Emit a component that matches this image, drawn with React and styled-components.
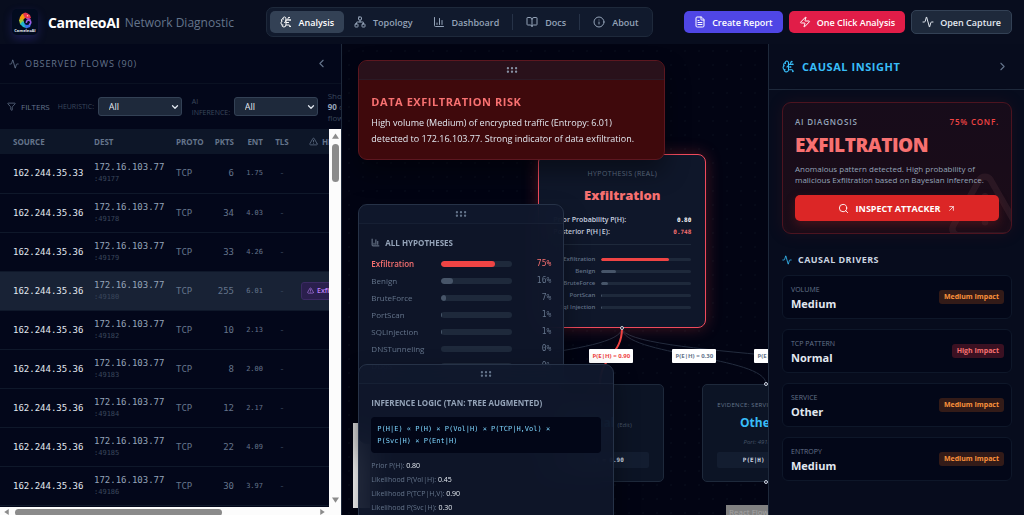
import React from 'react';
import styled, { createGlobalStyle } from 'styled-components';
import {
    Activity,
    ArrowUpRight,
    BookOpen,
    BrainCircuit,
    ChartColumn,
    ChevronDown,
    ChevronLeft,
    ChevronRight,
    FileText,
    Funnel,
    GripHorizontal,
    Info,
    Network,
    Search,
    TriangleAlert,
    Zap,
} from 'lucide-react';

const flows = [
    { src: '162.244.35.33', port: 49177, pkts: 6, ent: '1.75' },
    { src: '162.244.35.36', port: 49178, pkts: 34, ent: '4.03' },
    { src: '162.244.35.36', port: 49179, pkts: 33, ent: '4.26' },
    { src: '162.244.35.36', port: 49180, pkts: 255, ent: '6.01', flag: 'Exfiltration' },
    { src: '162.244.35.36', port: 49182, pkts: 10, ent: '2.13' },
    { src: '162.244.35.36', port: 49183, pkts: 8, ent: '2.00' },
    { src: '162.244.35.36', port: 49184, pkts: 12, ent: '2.17' },
    { src: '162.244.35.36', port: 49185, pkts: 22, ent: '4.09' },
    { src: '162.244.35.36', port: 49186, pkts: 30, ent: '3.97' },
];

const hypotheses = [
    { name: 'Exfiltration', pct: 75 },
    { name: 'Benign', pct: 16 },
    { name: 'BruteForce', pct: 7 },
    { name: 'PortScan', pct: 1 },
    { name: 'SQLInjection', pct: 1 },
    { name: 'DNSTunneling', pct: 0 },
    { name: 'DDoS', pct: 0 },
];

const likelihoods = [
    ['Prior P(H):', '0.80'],
    ['Likelihood P(Vol|H):', '0.45'],
    ['Likelihood P(TCP|H,V):', '0.90'],
    ['Likelihood P(Svc|H):', '0.30'],
];

const drivers = [
    { name: 'Volume', value: 'Medium', impact: 'Medium' },
    { name: 'TCP Pattern', value: 'Normal', impact: 'High' },
    { name: 'Service', value: 'Other', impact: 'Medium' },
    { name: 'Entropy', value: 'Medium', impact: 'Medium' },
];

const Logo = () => (
    <LogoBox>
        <svg width="26" height="26" viewBox="0 0 26 26" role="img" aria-label="CameleoAI logo">
            <path d="M8 8l2-3 3-1 1 4-3 3-4 1z" fill="#f59e0b" />
            <path d="M11 5l2-1.5L15 4l3 2 1 3-3 1-3-1z" fill="#e8364f" />
            <path d="M7 11l4-1 1 3-2 3-2-1z" fill="#a3c93a" />
            <path d="M8 15l3-3 2 3 1 4-3-1z" fill="#22b8cf" />
            <path d="M12 15l3 1 4-1-1 3-4 1.5z" fill="#3b6fe8" />
            <path d="M14.5 14a2.2 2.2 0 1 1 2.5 1.5" stroke="#9b5de5" strokeWidth="1.6" fill="none" />
            <path d="M14 9l4 .5 1 1.5-4-.5z" fill="#c04bd0" />
            <circle cx="15.5" cy="6.8" r="0.7" fill="#ffe3a3" />
            <text x="13" y="23" textAnchor="middle" fontSize="4" fontWeight="700" fill="#e2e8f0">CameleoAI</text>
        </svg>
    </LogoBox>
);

const Grip = () => (
    <GripBar>
        <GripHorizontal size={14} />
    </GripBar>
);

const Header = () => (
    <TopBar>
        <Brand>
            <Logo />
            <BrandName>CameleoAI</BrandName>
            <BrandSub>Network Diagnostic</BrandSub>
        </Brand>
        <Nav>
            <NavItem $active><BrainCircuit size={12} />Analysis</NavItem>
            <NavItem><Network size={12} />Topology</NavItem>
            <NavItem><ChartColumn size={12} />Dashboard</NavItem>
            <NavLine />
            <NavItem><BookOpen size={12} />Docs</NavItem>
            <NavLine />
            <NavItem><Info size={12} />About</NavItem>
        </Nav>
        <Actions>
            <Action $bg="#4f46e5"><FileText size={12} />Create Report</Action>
            <Action $bg="#e11d48"><Zap size={12} />One Click Analysis</Action>
            <Action $bg="#1e293b" $line="#334155"><Activity size={12} />Open Capture</Action>
        </Actions>
    </TopBar>
);

const FlowPanel = () => (
    <Left>
        <LeftHead>
            <Activity size={10} />
            <LeftTitle>Observed Flows (90)</LeftTitle>
            <IconBtn aria-label="Collapse flows"><ChevronLeft size={13} /></IconBtn>
        </LeftHead>
        <Filters>
            <FilterTag><Funnel size={9} />FILTERS</FilterTag>
            <FilterLabel htmlFor="heuristic">HEURISTIC:</FilterLabel>
            <SelectBox>
                <Select id="heuristic"><option>All</option></Select>
                <ChevronDown size={10} strokeWidth={3} />
            </SelectBox>
            <FilterLabel htmlFor="inference" $wrap>AI INFERENCE:</FilterLabel>
            <SelectBox>
                <Select id="inference"><option>All</option></Select>
                <ChevronDown size={10} strokeWidth={3} />
            </SelectBox>
            <Showing>Showing <b>90</b> of 90 flows</Showing>
        </Filters>
        <TableArea>
            <TableClip>
                <Table>
                    <colgroup>
                        <col width="88" />
                        <col width="82" />
                        <col width="38" />
                        <col width="32" />
                        <col width="29" />
                        <col width="26" />
                        <col width="120" />
                    </colgroup>
                    <thead>
                        <tr>
                            <Th>Source</Th>
                            <Th>Dest</Th>
                            <Th>Proto</Th>
                            <Th $align="right">Pkts</Th>
                            <Th $align="right">Ent</Th>
                            <Th $align="center">TLS</Th>
                            <Th $align="center"><ThIcon><TriangleAlert size={9} />Heuristic</ThIcon></Th>
                        </tr>
                    </thead>
                    <tbody>
                        {flows.map(f => (
                            <Row key={f.port} $on={!!f.flag}>
                                <Td $color="#e2e8f0">{f.src}</Td>
                                <Td $color="#94a3b8">172.16.103.77<Port>:{f.port}</Port></Td>
                                <Td>TCP</Td>
                                <Td $align="right">{f.pkts}</Td>
                                <Td $align="right" $small>{f.ent}</Td>
                                <Td $align="center" $color="#334155">-</Td>
                                <Td>{f.flag && <Flag><TriangleAlert size={7} />{f.flag}</Flag>}</Td>
                            </Row>
                        ))}
                    </tbody>
                </Table>
            </TableClip>
            <VBar>
                <Arrow viewBox="0 0 8 6"><path d="M4 0l4 6H0z" /></Arrow>
                <VThumb />
                <Arrow viewBox="0 0 8 6"><path d="M0 0h8L4 6z" /></Arrow>
            </VBar>
        </TableArea>
        <HBar>
            <Arrow viewBox="0 0 6 8"><path d="M6 0v8L0 4z" /></Arrow>
            <HThumb />
            <Arrow viewBox="0 0 6 8"><path d="M0 0v8l6-4z" /></Arrow>
        </HBar>
    </Left>
);

const Graph = () => (
    <Canvas>
        <Edges>
            <path d="M280 284C280 312 92 312 92 340" />
            <path d="M280 284C280 312 424 312 424 340" />
            <path d="M280 284C280 312 588 312 588 340" />
            <path className="hot" d="M280 284C280 312 258 312 258 340" />
        </Edges>
        <EdgeLabel $x={247} $y={305} $hot>P(E|H) = 0.90</EdgeLabel>
        <EdgeLabel $x={330} $y={305}>P(E|H) = 0.30</EdgeLabel>
        <EdgeLabel $x={412} $y={305}>P(E|H) = 0.85</EdgeLabel>

        <RootNode>
            <NodeKind>Hypothesis (Real)</NodeKind>
            <RootName>Exfiltration</RootName>
            <ProbRow>Prior Probability P(H):<Mono>0.80</Mono></ProbRow>
            <ProbRow>Posterior P(H|E):<Mono $red>0.748</Mono></ProbRow>
            <Rule />
            {hypotheses.slice(0, 5).map((h, i) => (
                <MiniRow key={h.name}>
                    <span>{h.name === 'SQLInjection' ? 'Sql Injection' : h.name}</span>
                    <Track $h={3}><Fill $hot={i === 0} style={{ width: `${h.pct}%` }} /></Track>
                </MiniRow>
            ))}
        </RootNode>
        <Handle $x={280} $y={284} />

        <EvidenceNode $x={194} $y={340}>
            <NodeKind $small>Evidence: TCP</NodeKind>
            <EvidenceName>Normal <Edit>(Edit)</Edit></EvidenceName>
            <EvidenceNote>Ratio: 1:1</EvidenceNote>
            <EvidenceProb>P(E|H) = 0.90</EvidenceProb>
        </EvidenceNode>
        <EvidenceNode $x={360} $y={340}>
            <NodeKind $small>Evidence: Service</NodeKind>
            <EvidenceName>Other <Edit>(Edit)</Edit></EvidenceName>
            <EvidenceNote>Port: 49180 (TCP)</EvidenceNote>
            <EvidenceProb>P(E|H) = 0.30</EvidenceProb>
        </EvidenceNode>
        <Handle $x={424} $y={340} />
        <Handle $x={424} $y={438} />
        <ZoomControls />
        <Attribution href="#reactflow">React Flow</Attribution>

        <AlertPanel>
            <Grip />
            <AlertBody>
                <AlertTitle>Data Exfiltration Risk</AlertTitle>
                <AlertText>High volume (Medium) of encrypted traffic (Entropy: 6.01) detected to 172.16.103.77. Strong indicator of data exfiltration.</AlertText>
            </AlertBody>
        </AlertPanel>

        <HypoPanel>
            <Grip />
            <PanelBody>
                <PanelTitle><ChartColumn size={9} />ALL HYPOTHESES</PanelTitle>
                {hypotheses.map((h, i) => (
                    <HypoRow key={h.name} $hot={i === 0}>
                        <span>{h.name}</span>
                        <Track $h={6}><Fill $hot={i === 0} style={{ width: `${h.pct}%` }} /></Track>
                        <Pct>{h.pct}%</Pct>
                    </HypoRow>
                ))}
            </PanelBody>
        </HypoPanel>

        <LogicPanel>
            <Grip />
            <PanelBody>
                <PanelTitle>INFERENCE LOGIC (TAN: TREE AUGMENTED)</PanelTitle>
                <Formula>P(H|E) ∝ P(H) × P(Vol|H) × P(TCP|H,Vol) × P(Svc|H) × P(Ent|H)</Formula>
                {likelihoods.map(([name, value]) => (
                    <Likelihood key={name}>{name} <b>{value}</b></Likelihood>
                ))}
            </PanelBody>
        </LogicPanel>
    </Canvas>
);

const Insight = () => (
    <Right>
        <RightHead>
            <BrainCircuit size={13} />
            <RightTitle>Causal Insight</RightTitle>
            <IconBtn aria-label="Collapse insight"><ChevronRight size={13} /></IconBtn>
        </RightHead>
        <RightBody>
            <Diagnosis>
                <Watermark><TriangleAlert size={78} /></Watermark>
                <DiagTop>AI DIAGNOSIS<Conf>75% CONF.</Conf></DiagTop>
                <DiagName>EXFILTRATION</DiagName>
                <DiagText>Anomalous pattern detected. High probability of malicious Exfiltration based on Bayesian inference.</DiagText>
                <Inspect><Search size={11} />INSPECT ATTACKER<ArrowUpRight size={9} /></Inspect>
            </Diagnosis>
            <DriversTitle><Activity size={10} />Causal Drivers</DriversTitle>
            <Drivers>
                {drivers.map(d => (
                    <Driver key={d.name}>
                        <div>
                            <DriverName>{d.name}</DriverName>
                            <DriverValue>{d.value}</DriverValue>
                        </div>
                        <Impact $high={d.impact === 'High'}>{d.impact} Impact</Impact>
                    </Driver>
                ))}
            </Drivers>
        </RightBody>
    </Right>
);

const App = () => (
    <Shell>
        <GlobalStyle />
        <Header />
        <Main>
            <FlowPanel />
            <Graph />
            <Insight />
        </Main>
    </Shell>
);

const sans = '"Open Sans", "Noto Sans", sans-serif';
const mono = '"DejaVu Sans Mono", "Liberation Mono", monospace';

const GlobalStyle = createGlobalStyle`
    * { box-sizing: border-box; }
    body {
        margin: 0;
        background: #020617;
        color: #e2e8f0;
        font-family: ${sans};
        font-size: 10px;
    }
    button, select { font-family: inherit; margin: 0; }
    svg { flex: none; display: block; }
    h1, h2, h3, p { margin: 0; }
`;

const Shell = styled.div`
    height: 100vh;
    display: flex;
    flex-direction: column;
    overflow: hidden;
`;

const TopBar = styled.header`
    flex: none;
    height: 44px;
    padding: 0 12px;
    display: flex;
    align-items: center;
    justify-content: space-between;
    background: #080d1e;
    white-space: nowrap;
`;
const Brand = styled.div`
    display: flex;
    align-items: center;
`;
const LogoBox = styled.div`
    border-radius: 5px;
    background: #020b1f;
    box-shadow: 0 4px 10px rgba(79, 70, 229, 0.25);
`;
const BrandName = styled.h1`
    margin-left: 10px;
    font-size: 14px;
    letter-spacing: -0.025em;
    color: #fff;
`;
const BrandSub = styled.span`
    margin-left: 5px;
    font-size: 12px;
    color: #64748b;
`;

const Nav = styled.nav`
    display: flex;
    align-items: center;
    padding: 3px;
    border: 1px solid #1e293b;
    border-radius: 7px;
    background: #111a2d;
`;
const NavItem = styled.button`
    height: 22px;
    padding: 0 10px;
    display: flex;
    align-items: center;
    gap: 7px;
    border: 0;
    border-radius: 5px;
    background: ${p => (p.$active ? '#334155' : 'transparent')};
    color: ${p => (p.$active ? '#fff' : '#94a3b8')};
    font-size: 9px;
    font-weight: 600;
`;
const NavLine = styled.span`
    width: 1px;
    height: 16px;
    margin: 0 3px;
    background: #263247;
`;

const Actions = styled.div`
    display: flex;
    align-items: center;
    gap: 6px;
`;
const Action = styled.button`
    height: ${p => (p.$line ? '24px' : '22px')};
    padding: 0 10px;
    display: flex;
    align-items: center;
    gap: 6px;
    border: ${p => (p.$line ? `1px solid ${p.$line}` : '0')};
    border-radius: 5px;
    background: ${p => p.$bg};
    color: ${p => (p.$line ? '#e2e8f0' : '#fff')};
    font-size: 9px;
    font-weight: 600;
`;

const Main = styled.main`
    flex: 1;
    min-height: 0;
    display: grid;
    grid-template-columns: calc(100% / 3 + 1px) 1fr 25%;
`;

const Left = styled.section`
    min-width: 0;
    min-height: 0;
    display: flex;
    flex-direction: column;
    overflow: hidden;
    border-right: 1px solid #1e293b;
    background: #03071a;
`;
const LeftHead = styled.div`
    flex: none;
    height: 40px;
    padding: 0 13px 0 9px;
    display: flex;
    align-items: center;
    gap: 6px;
    border-bottom: 1px solid #0a1122;
    color: #64748b;
`;
const LeftTitle = styled.h2`
    flex: 1;
    font-size: 9px;
    font-weight: 500;
    letter-spacing: 0.1em;
    text-transform: uppercase;
`;
const IconBtn = styled.button`
    padding: 0;
    border: 0;
    background: none;
    color: #64748b;
`;

const Filters = styled.div`
    flex: none;
    height: 45px;
    padding-left: 7px;
    display: flex;
    align-items: center;
    overflow: hidden;
    color: #3b475c;
    font-size: 8px;
`;
const FilterTag = styled.span`
    display: flex;
    align-items: center;
    gap: 5px;
    margin-right: 8px;
    color: #64748b;
`;
const FilterLabel = styled.label`
    flex: none;
    width: ${p => (p.$wrap ? '42px' : '40px')};
    font-size: 7px;
    line-height: 11px;
`;
const SelectBox = styled.span`
    flex: none;
    display: grid;
    align-items: center;
    margin-right: 10px;

    > * { grid-area: 1 / 1; }
    > svg {
        justify-self: end;
        margin-right: 2px;
        color: #e2e8f0;
        pointer-events: none;
    }
`;
const Select = styled.select`
    width: 84px;
    height: 19px;
    padding: 0 10px;
    appearance: none;
    border: 1px solid #334155;
    border-radius: 3px;
    background: #1e293b;
    color: #e2e8f0;
    font-size: 9px;
`;
const Showing = styled.span`
    flex: none;
    width: 34px;
    line-height: 11px;
    font-size: 8px;
    b { color: #94a3b8; }
`;

const TableArea = styled.div`
    flex: 1;
    min-height: 0;
    display: flex;
`;
const TableClip = styled.div`
    flex: 1;
    min-width: 0;
    overflow: hidden;
`;
const Table = styled.table`
    width: 415px;
    table-layout: fixed;
    border-collapse: collapse;
`;
const Th = styled.th`
    height: 25px;
    padding: 0 6px;
    background: #0d1628;
    color: #64748b;
    font-size: 8px;
    font-weight: 700;
    text-align: ${p => p.$align || 'left'};
    text-transform: uppercase;
    &:first-child { padding-left: 13px; }
`;
const ThIcon = styled.span`
    display: flex;
    align-items: center;
    gap: 4px;
    padding-left: 8px;
`;
const Row = styled.tr`
    height: 39px;
    border-bottom: 1px solid #0f182a;
    background: ${p => (p.$on ? '#182235' : 'transparent')};
`;
const Td = styled.td`
    padding: 0 6px;
    color: ${p => p.$color || '#64748b'};
    font-family: ${mono};
    font-size: ${p => (p.$small ? '7px' : '9px')};
    line-height: 12px;
    text-align: ${p => p.$align || 'left'};
    &:first-child { padding-left: 13px; }
`;
const Port = styled.div`
    color: #3b475c;
    font-size: 7px;
`;
const Flag = styled.span`
    display: inline-flex;
    align-items: center;
    gap: 3px;
    height: 18px;
    padding: 0 5px;
    border: 1px solid #3b2a63;
    border-radius: 3px;
    background: #2a1f4d;
    color: #c084fc;
    font-family: ${sans};
    font-size: 7px;
    font-weight: 600;
`;

const VBar = styled.div`
    flex: none;
    width: 12px;
    padding: 4px 0;
    display: flex;
    flex-direction: column;
    align-items: center;
    gap: 5px;
    background: #fcfcfc;
    > :last-child { margin-top: auto; }
`;
const VThumb = styled.div`
    width: 7px;
    height: 38px;
    border-radius: 4px;
    background: #8b8b8b;
`;
const HBar = styled.div`
    flex: none;
    height: 8px;
    padding: 2px 15px 0 3px;
    display: flex;
    gap: 5px;
    overflow: hidden;
    background: #fcfcfc;
    > :last-child { margin-left: auto; }
`;
const HThumb = styled.div`
    width: 64%;
    height: 7px;
    border-radius: 4px;
    background: #8b8b8b;
`;
const Arrow = styled.svg`
    width: 7px;
    height: 6px;
    fill: #8b8b8b;
`;

const Canvas = styled.section`
    position: relative;
    min-width: 0;
    overflow: hidden;
    background: #020413 radial-gradient(circle, #080d1c 0.5px, transparent 1px) 0 0 / 14px 14px;
`;
const Edges = styled.svg`
    position: absolute;
    inset: 0;
    width: 100%;
    height: 100%;
    fill: none;
    stroke: #232c3e;
    stroke-width: 1;
    .hot { stroke: #ef4444; stroke-width: 2; }
`;
const EdgeLabel = styled.span`
    position: absolute;
    left: ${p => p.$x}px;
    top: ${p => p.$y}px;
    width: 44px;
    height: 14px;
    border-radius: 1px;
    background: #fff;
    color: ${p => (p.$hot ? '#ef4444' : '#64748b')};
    font-size: 6px;
    font-weight: 700;
    line-height: 14px;
    text-align: center;
    white-space: nowrap;
`;
const Handle = styled.i`
    position: absolute;
    left: ${p => p.$x - 2}px;
    top: ${p => p.$y - 2}px;
    width: 4px;
    height: 4px;
    border: 1px solid #cbd5e1;
    border-radius: 50%;
    background: #1a192b;
`;

const RootNode = styled.div`
    position: absolute;
    left: 196px;
    top: 110px;
    width: 168px;
    height: 174px;
    padding: 14px 14px 0;
    border: 1px solid #f04a5c;
    border-radius: 8px;
    background: #0f172a;
    box-shadow: 0 0 16px rgba(239, 68, 68, 0.3);
`;
const NodeKind = styled.div`
    color: #64748b;
    font-size: ${p => (p.$small ? '6px' : '7px')};
    line-height: 10px;
    letter-spacing: 0.05em;
    text-align: ${p => (p.$small ? 'left' : 'center')};
    text-transform: uppercase;
    white-space: nowrap;
`;
const RootName = styled.div`
    margin: 8px 0 11px;
    color: #f87171;
    font-size: 13px;
    font-weight: 800;
    line-height: 16px;
    text-align: center;
`;
const ProbRow = styled.div`
    display: flex;
    justify-content: space-between;
    color: #cbd5e1;
    font-size: 7px;
    font-weight: 600;
    line-height: 12px;
`;
const Mono = styled.b`
    color: ${p => (p.$red ? '#f87171' : '#fff')};
    font-family: ${mono};
    font-size: 6px;
`;
const Rule = styled.div`
    height: 1px;
    margin: 6px 0 8px;
    background: #1e293b;
`;
const MiniRow = styled.div`
    height: 12px;
    display: grid;
    grid-template-columns: 42px 1fr;
    gap: 6px;
    align-items: center;
    color: #64748b;
    font-size: 6px;
    font-weight: 600;
    text-align: right;
    white-space: nowrap;
    > span { justify-self: end; }
`;
const Track = styled.div`
    height: ${p => p.$h}px;
    border-radius: 3px;
    overflow: hidden;
    background: #1e293b;
`;
const Fill = styled.div`
    height: 100%;
    border-radius: 3px;
    background: ${p => (p.$hot ? '#ef4444' : '#475569')};
`;

const EvidenceNode = styled.div`
    position: absolute;
    left: ${p => p.$x}px;
    top: ${p => p.$y}px;
    width: 128px;
    height: 98px;
    padding: 15px 14px;
    border: 1px solid #1e293b;
    border-radius: 5px;
    background: #0c1425;
    text-align: center;
`;
const EvidenceName = styled.div`
    margin-top: 4px;
    color: #38bdf8;
    font-size: 12px;
    font-weight: 700;
    line-height: 18px;
    white-space: nowrap;
`;
const Edit = styled.span`
    color: #475569;
    font-size: 6px;
    font-weight: 400;
`;
const EvidenceNote = styled.div`
    margin: 3px 0 5px;
    color: #475569;
    font-size: 6px;
    font-style: italic;
    line-height: 10px;
`;
const EvidenceProb = styled.div`
    border-radius: 2px;
    background: #131d30;
    color: #cbd5e1;
    font-family: ${mono};
    font-size: 6px;
    font-weight: 700;
    line-height: 16px;
`;
const ZoomControls = styled.div`
    position: absolute;
    left: 11px;
    top: 379px;
    width: 17px;
    height: 85px;
    background: #fefefe;
`;
const Attribution = styled.a`
    position: absolute;
    right: 0;
    bottom: 0;
    width: 42px;
    height: 10px;
    padding-left: 3px;
    overflow: hidden;
    background: #818181;
    color: #a3a3a3;
    font-size: 8px;
    line-height: 14px;
    white-space: nowrap;
    text-decoration: none;
`;

const Panel = styled.div`
    position: absolute;
    left: 16px;
    border: 1px solid #263247;
    border-radius: 9px;
    overflow: hidden;
    background: rgba(15, 23, 42, 0.92);
    backdrop-filter: blur(12px);
    box-shadow: 0 12px 25px rgba(0, 0, 0, 0.4);
`;
const GripBar = styled.div`
    height: 19px;
    display: flex;
    align-items: center;
    justify-content: center;
    border-bottom: 1px solid rgba(51, 65, 85, 0.2);
    background: rgba(30, 41, 59, 0.15);
    color: #64748b;
`;
const AlertPanel = styled(Panel)`
    top: 16px;
    width: 307px;
    height: 100px;
    border-color: #5c1720;
    background: #3f090c;
    ${GripBar} { background: #29111b; color: #8791a3; }
`;
const HypoPanel = styled(Panel)`
    top: 160px;
    width: 206px;
    height: 240px;
`;
const LogicPanel = styled(Panel)`
    top: 320px;
    width: 256px;
    height: 190px;
`;
const AlertBody = styled.div`
    padding: 14px 24px 14px 12px;
`;
const AlertTitle = styled.h3`
    margin-bottom: 6px;
    color: #f87171;
    font-size: 11px;
    line-height: 15px;
    letter-spacing: 0.05em;
    text-transform: uppercase;
`;
const AlertText = styled.p`
    color: #e2e8f0;
    font-size: 9px;
    line-height: 16px;
`;
const PanelBody = styled.div`
    padding: 12px;
`;
const PanelTitle = styled.h3`
    display: flex;
    align-items: center;
    gap: 5px;
    height: 12px;
    margin-bottom: 7px;
    color: #94a3b8;
    font-size: 8px;
    white-space: nowrap;
`;
const HypoRow = styled.div`
    height: 17px;
    display: grid;
    grid-template-columns: 70px 71px 1fr;
    align-items: center;
    color: ${p => (p.$hot ? '#f87171' : '#64748b')};
    font-size: 8px;
    font-weight: ${p => (p.$hot ? 600 : 400)};
`;
const Pct = styled.span`
    font-family: ${mono};
    font-weight: 400;
    text-align: right;
`;
const Formula = styled.div`
    margin: 9px 0 6px;
    padding: 6px 24px 6px 6px;
    border-radius: 4px;
    background: #020617;
    color: #7dd3fc;
    font-family: ${mono};
    font-size: 7px;
    line-height: 12px;
`;
const Likelihood = styled.p`
    color: #64748b;
    font-size: 7px;
    line-height: 14px;
    b { color: #e2e8f0; font-weight: 500; }
`;

const Right = styled.aside`
    min-width: 0;
    overflow: hidden;
    border-left: 1px solid #1e293b;
    background: #070c1d;
`;
const RightHead = styled.div`
    height: 46px;
    padding: 0 15px 0 13px;
    display: flex;
    align-items: center;
    gap: 7px;
    border-bottom: 1px solid #1e293b;
    color: #38bdf8;
`;
const RightTitle = styled.h2`
    flex: 1;
    font-size: 11px;
    letter-spacing: 0.05em;
    text-transform: uppercase;
`;
const RightBody = styled.div`
    padding: 12px 12px 12px 13px;
`;
const Diagnosis = styled.div`
    position: relative;
    padding: 13px 12px 12px;
    border: 1px solid #4c1420;
    border-radius: 9px;
    overflow: hidden;
    background: linear-gradient(#170c1a, #1b0c18);
    box-shadow: 0 0 16px rgba(127, 29, 29, 0.15);
`;
const Watermark = styled.span`
    position: absolute;
    right: -13px;
    bottom: -12px;
    color: rgba(248, 150, 150, 0.08);
`;
const DiagTop = styled.div`
    display: flex;
    justify-content: space-between;
    color: #94a3b8;
    font-size: 8px;
    font-weight: 600;
    line-height: 12px;
    letter-spacing: 0.1em;
`;
const Conf = styled.span`
    color: #ef4444;
`;
const DiagName = styled.div`
    margin: 6px 0 7px;
    color: #f87171;
    font-size: 19px;
    font-weight: 800;
    line-height: 22px;
    letter-spacing: -0.025em;
`;
const DiagText = styled.p`
    margin-bottom: 10px;
    color: #94a3b8;
    font-size: 8px;
    line-height: 11px;
`;
const Inspect = styled.button`
    position: relative;
    width: 100%;
    height: 26px;
    display: flex;
    align-items: center;
    justify-content: center;
    gap: 7px;
    border: 0;
    border-radius: 5px;
    background: #dc2626;
    color: #fff;
    font-size: 9px;
    font-weight: 700;
    box-shadow: 0 4px 10px rgba(127, 29, 29, 0.4);
`;
const DriversTitle = styled.h3`
    display: flex;
    align-items: center;
    gap: 6px;
    margin: 20px 0 9px;
    color: #cbd5e1;
    font-size: 9px;
    line-height: 12px;
    letter-spacing: 0.05em;
    text-transform: uppercase;
    svg { color: #38bdf8; }
`;
const Drivers = styled.div`
    display: flex;
    flex-direction: column;
    gap: 10px;
`;
const Driver = styled.div`
    height: 44px;
    padding: 0 7px 0 8px;
    display: flex;
    align-items: center;
    justify-content: space-between;
    border: 1px solid #0e1729;
    border-radius: 6px;
    background: #030718;
`;
const DriverName = styled.div`
    color: #64748b;
    font-size: 7px;
    line-height: 12px;
    text-transform: uppercase;
`;
const DriverValue = styled.div`
    color: #e2e8f0;
    font-size: 11px;
    font-weight: 700;
    line-height: 15px;
`;
const Impact = styled.span`
    padding: 0 5px;
    border-radius: 3px;
    background: ${p => (p.$high ? '#3b1122' : '#331b18')};
    color: ${p => (p.$high ? '#f87171' : '#fb923c')};
    font-size: 7px;
    font-weight: 700;
    line-height: 14px;
`;

export default App;
